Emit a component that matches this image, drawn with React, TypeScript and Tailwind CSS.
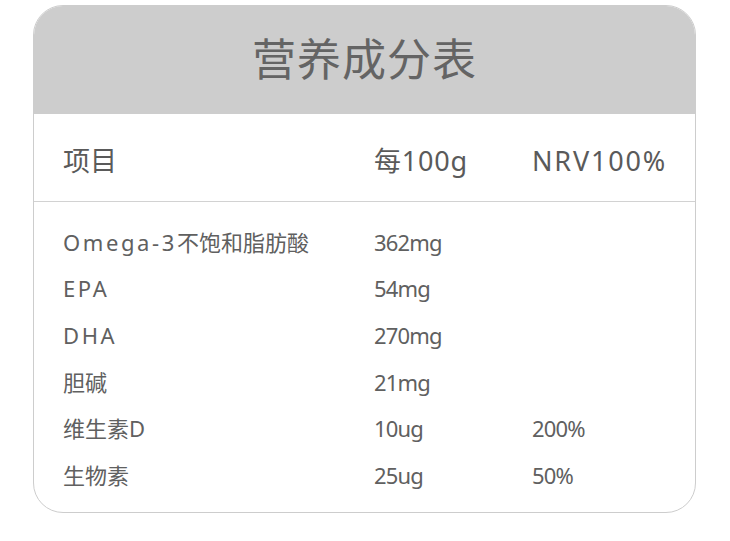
import { FC } from "react";

const rows = [
  { name: ["Omega-3", "不饱和脂肪酸"], amount: "362mg", nrv: "" },
  { name: ["EPA", ""], amount: "54mg", nrv: "" },
  { name: ["DHA", ""], amount: "270mg", nrv: "" },
  { name: ["", "胆碱"], amount: "21mg", nrv: "" },
  { name: ["", "维生素D"], amount: "10ug", nrv: "200%" },
  { name: ["", "生物素"], amount: "25ug", nrv: "50%" },
];

const font = { fontFamily: '"Noto Sans", "Noto Sans CJK SC", sans-serif' };

const App: FC = () => {
  return (
    <div className="w-[730px] h-[541px] bg-white pt-[5px] pl-[33px]" style={font}>
      <div className="w-[663px] h-[508px] rounded-[30px] border-[1.5px] border-[#cdcdcd] overflow-hidden bg-white flex flex-col">
        <div className="h-[108px] bg-[#cdcdcd] flex items-center justify-center">
          <h1 className="text-[44px] leading-none text-[#646464] tracking-[1px] pb-[2px]">营养成分表</h1>
        </div>

        <div className="h-[88px] border-b-[1.5px] border-[#d2d2d2] grid grid-cols-[311px_158px_1fr] items-center pl-[29px] pt-[7px] text-[27px] text-[#5a5a5a]">
          <div>项目</div>
          <div className="tracking-[0.8px]">每100g</div>
          <div className="tracking-[1.8px]">NRV100%</div>
        </div>

        <div className="pt-[17px] flex flex-col text-[22px] text-[#606060]">
          {rows.map((r, i) => (
            <div key={i} className="h-[46.6px] grid grid-cols-[311px_158px_1fr] items-center pl-[29px]">
              <div>
                {r.name[0] && <span className="tracking-[2.6px]">{r.name[0]}</span>}
                {r.name[1]}
              </div>
              <div className="tracking-[-0.8px]">{r.amount}</div>
              <div className="tracking-[-0.8px]">{r.nrv}</div>
            </div>
          ))}
        </div>
      </div>
    </div>
  );
};

export default App;
